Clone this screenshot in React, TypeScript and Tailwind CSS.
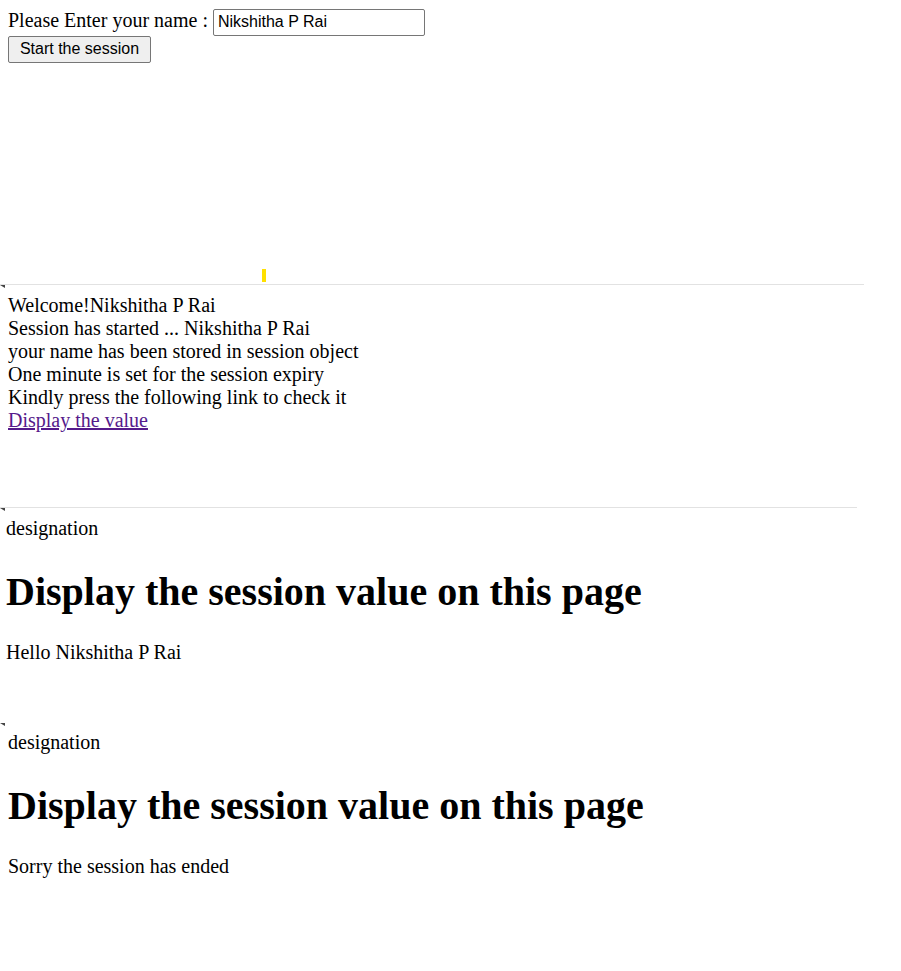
import React from 'react'

const serif = "font-['Liberation_Serif','Times_New_Roman',serif]"

function Corner() {
  return (
    <div className="absolute left-0 top-0 h-0 w-0 border-l-[5px] border-t-[3px] border-l-transparent border-t-[#444]" />
  )
}

export default function App() {
  return (
    <div className={`${serif} w-[901px] h-[971px] bg-white text-black text-[20px] leading-[23px] overflow-hidden`}>
      {/* 1. form */}
      <div className="relative h-[285px] w-[864px] border-b border-[#e2e2e2]">
        <div className="flex h-[36px] items-start pl-2 pt-[9px]">
          <span className="leading-[22px]">Please Enter your name :&nbsp;</span>
          <input
            readOnly
            value="Nikshitha P Rai"
            className="h-[27px] w-[212px] border border-[#767676] rounded-[2px] px-[4px] pb-[2px] font-['Liberation_Sans',Arial,sans-serif] text-[16px] text-black outline-none"
          />
        </div>
        <div className="flex pl-2">
          <button className="h-[27px] w-[143px] border border-[#767676] rounded-[2px] bg-[#efefef] pb-[2px] font-['Liberation_Sans',Arial,sans-serif] text-[16px] leading-none text-black">
            Start the session
          </button>
        </div>
        <div className="absolute left-[262px] top-[269px] h-[13px] w-[4px] bg-[#ffe000]" />
      </div>

      {/* 2. session started */}
      <div className="relative h-[223px] w-[857px] border-b border-[#e2e2e2] pl-2 pt-[9px]">
        <Corner />
        <div>Welcome!Nikshitha P Rai</div>
        <div>Session has started ... Nikshitha P Rai</div>
        <div>your name has been stored in session object</div>
        <div>One minute is set for the session expiry</div>
        <div>Kindly press the following link to check it</div>
        <a href="#" className="text-[#551a8b] underline">Display the value</a>
      </div>

      {/* 3. display page */}
      <div className="relative h-[215px] pl-[6px] pt-[9px]">
        <Corner />
        <div>designation</div>
        <h1 className="mt-[29px] text-[40px] leading-[46px] font-bold">Display the session value on this page</h1>
        <p className="mt-[26px]">Hello Nikshitha P Rai</p>
      </div>

      {/* 4. expired */}
      <div className="relative pl-2 pt-[8px]">
        <Corner />
        <div>designation</div>
        <h1 className="mt-[29px] text-[40px] leading-[46px] font-bold">Display the session value on this page</h1>
        <p className="mt-[26px]">Sorry the session has ended</p>
      </div>
    </div>
  )
}
